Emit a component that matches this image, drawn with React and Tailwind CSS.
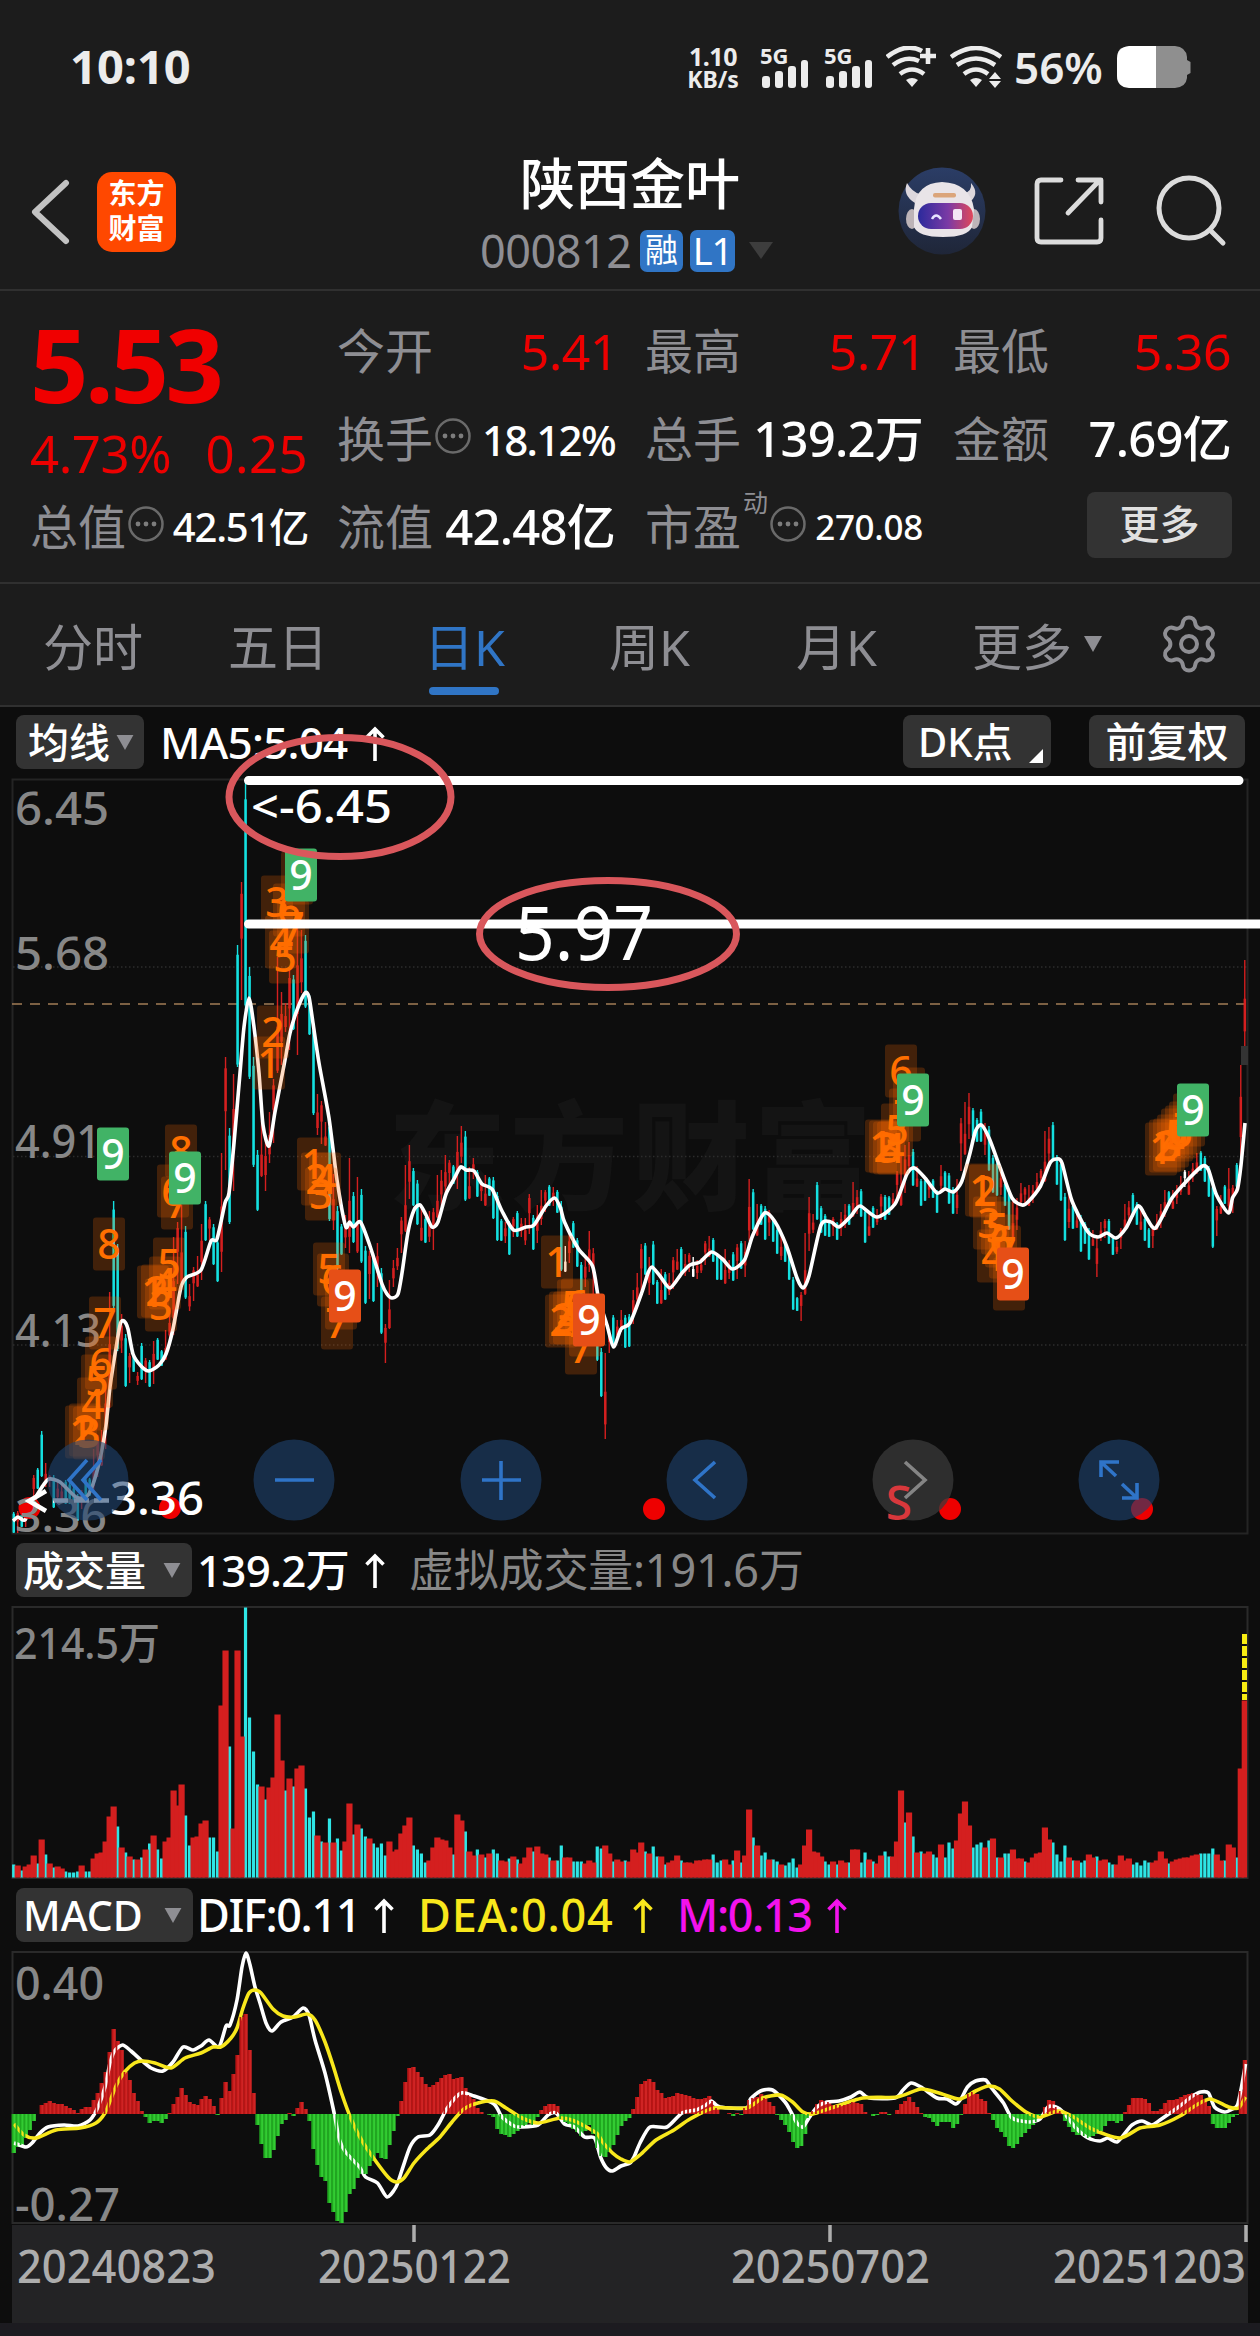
import { Settings } from "lucide-react";

const STEP = 3.997;
const barX = (i) => 13.7 + i * STEP;

// one entry per trading day: r = up, c = down, then bar height
const VOLUME =
  "c13 r12 c7 r11 r13 r22 c14 r38 c23 r14 c10 r11 r9 c6 c5 c5 c6 r12 c6 c6 r19 r24 r25 r36 r61 r71 c51 r30 c25 r21 c18 r18 c20 r28 c34 r42 c28 c19 r36 r40 r87 r72 r93 c62 c32 r40 r41 r54 r57 c40 c40 c26 r172 r227 c131 r49 r227 r141 c270 c160 c126 c93 r91 c78 r90 r100 r163 r117 c87 r99 c91 r109 r112 c89 c60 c66 r42 c36 r35 c59 r35 c39 c27 r36 r74 c43 r53 c49 c41 r39 c34 c30 c34 c22 r36 r26 r28 r44 r52 r60 c32 c28 c24 c15 r17 r30 r40 r38 r37 r30 c23 r63 r57 c46 r26 r22 c28 r23 c20 r24 c28 c24 r17 r16 c19 r21 c18 r14 r20 r30 c26 r31 r24 r23 c20 r17 c17 c32 r20 r20 c16 c16 c16 r14 r17 r15 c31 c29 r32 r24 c16 r18 r16 c17 r16 r28 r25 r35 c26 r24 c31 c21 r21 c13 r15 r17 r22 c17 r15 r15 r14 r17 r17 r18 r18 c23 c15 c17 r18 r13 c17 r27 c15 r22 r68 c40 r32 c22 c25 r18 c18 c16 r13 c12 c15 c19 c10 r13 r32 r48 r26 r25 r21 c16 c13 r16 c13 r17 r15 c15 r28 r28 c15 c25 r18 c16 r14 r22 c26 c21 r21 r36 r87 c55 r65 c41 r25 c26 r24 r26 c23 c20 r33 c20 c35 c29 r37 r64 r76 r52 c30 c33 c35 r30 c37 r39 c20 r20 c24 c24 r28 r19 r19 c16 r15 r20 r24 r25 r50 r38 c35 c23 c16 c32 r20 c17 r17 c15 c17 r23 r20 c21 r17 r18 c15 c13 r13 r22 r17 r19 c13 c15 c12 c17 c15 r15 r17 r26 r19 c14 r16 r18 r19 r20 r20 r22 r23 c24 c24 c24 c29 r23 r17 c17 r33 r30 c20 r109 r177";

// high-low of every candle
const CANDLES =
  "c1512-1533 r1511-1533 c1514-1527 r1508-1527 r1499-1518 r1475-1504 c1468-1489 c1431-1477 r1463-1487 r1475-1487 c1475-1508 r1482-1504 r1482-1503 c1480-1504 c1483-1504 c1487-1508 c1494-1521 r1490-1509 c1478-1497 c1478-1496 r1449-1494 r1435-1477 r1430-1466 r1384-1449 r1292-1408 c1201-1308 c1244-1351 r1314-1353 c1334-1387 r1353-1383 c1354-1372 r1372-1385 c1343-1380 r1358-1383 c1360-1387 r1341-1384 c1338-1360 c1350-1366 r1330-1360 r1313-1346 r1237-1335 r1222-1284 r1205-1284 c1226-1299 r1284-1311 r1267-1301 r1256-1287 r1224-1280 c1201-1241 r1217-1241 c1224-1265 c1239-1282 r1153-1272 r1057-1170 c1128-1224 r1074-1191 c945-1067 r882-1000 c781-1010 c967-1079 c1057-1167 c1150-1211 r1121-1177 r1141-1191 r1112-1163 r1079-1143 r957-1073 r992-1065 r1003-1032 r970-1050 c975-1030 r927-1055 r930-993 c935-1008 c995-1035 c1023-1115 r1094-1135 r1101-1144 r1122-1146 c1119-1221 r1174-1230 c1206-1270 c1224-1255 r1215-1248 r1158-1253 c1192-1243 r1177-1253 c1189-1263 c1246-1304 r1251-1299 c1253-1302 r1243-1287 c1268-1334 r1324-1363 r1280-1329 r1260-1287 r1248-1270 r1217-1253 r1165-1232 r1145-1199 c1168-1206 c1180-1225 r1208-1241 c1217-1243 r1211-1242 r1208-1250 r1175-1218 r1170-1206 r1155-1193 r1160-1187 c1165-1184 r1136-1189 r1126-1163 c1131-1201 r1167-1199 r1158-1179 c1170-1197 r1182-1201 r1175-1206 c1177-1196 c1177-1219 c1192-1241 c1219-1241 r1222-1243 c1221-1255 r1217-1237 c1211-1237 r1218-1237 r1218-1245 r1194-1234 c1215-1250 r1205-1243 r1190-1225 r1190-1212 c1185-1206 r1187-1206 c1190-1213 c1201-1271 w1246-1272 r1232-1263 c1221-1248 c1238-1267 c1262-1298 r1258-1287 r1231-1272 r1248-1301 c1301-1361 c1348-1397 r1353-1439 r1332-1353 c1315-1346 r1320-1342 r1310-1332 c1315-1348 c1314-1347 r1290-1324 r1273-1305 r1244-1295 c1243-1275 r1257-1295 c1241-1285 c1280-1304 r1269-1304 c1272-1300 r1273-1295 r1257-1289 r1249-1270 c1247-1273 r1254-1276 r1253-1272 w1257-1277 r1260-1279 r1258-1273 r1241-1265 r1236-1257 c1238-1262 c1254-1280 c1257-1280 r1249-1284 r1260-1279 c1252-1281 r1244-1279 c1241-1269 r1241-1277 r1179-1241 c1189-1230 r1204-1236 c1204-1225 c1206-1240 r1210-1236 c1217-1242 c1228-1254 r1236-1260 c1241-1262 c1252-1280 c1277-1310 c1297-1311 r1292-1321 r1233-1295 r1197-1251 r1214-1233 c1182-1220 c1206-1233 c1214-1236 c1220-1237 r1217-1236 c1222-1240 r1212-1236 r1204-1228 c1204-1225 r1182-1217 r1190-1214 c1189-1217 c1209-1243 r1212-1236 c1206-1228 r1209-1225 r1194-1220 c1195-1220 c1196-1215 r1193-1206 r1171-1200 r1155-1206 r1145-1193 r1142-1171 c1149-1186 r1166-1187 c1179-1206 c1179-1201 r1182-1198 c1179-1198 c1190-1213 r1165-1190 c1171-1190 c1173-1204 c1187-1214 r1179-1214 r1118-1171 r1102-1155 r1093-1139 c1108-1137 c1118-1142 c1109-1142 r1123-1155 c1126-1171 c1155-1193 c1161-1196 r1171-1195 c1182-1206 c1190-1230 r1201-1238 r1198-1230 r1183-1206 r1187-1203 r1185-1206 r1185-1203 r1173-1193 r1169-1188 r1131-1182 r1127-1166 c1122-1161 c1155-1185 c1161-1201 c1193-1241 r1193-1228 c1204-1229 r1209-1228 c1215-1252 c1222-1244 c1228-1260 r1230-1246 r1236-1277 r1222-1241 r1219-1238 c1219-1244 c1236-1255 r1241-1254 r1228-1249 r1204-1230 r1201-1222 c1193-1217 c1202-1225 r1209-1230 c1217-1241 c1228-1248 r1225-1248 r1214-1230 r1204-1228 r1190-1217 c1191-1206 r1190-1209 r1185-1204 r1176-1195 w1170-1187 r1171-1195 r1163-1182 r1153-1174 c1151-1171 c1156-1182 c1166-1197 c1182-1248 r1206-1236 r1195-1214 c1185-1204 r1168-1214 r1185-1213 c1163-1187 r1065-1171 r960-1046";

const MACD_BARS = [
  -39, -33, -31, -24, -16, -7, 0, 9, 11, 13, 11, 10, 10, 8, 6, 4, 1, 5, 7, 7, 14, 21, 31, 42, 62, 85, 73, 64, 42, 34,
  21, 13, 3, -3, -9, -7, -7, -9, -5, 1, 10, 17, 26, 19, 12, 10, 9, 15, 18, 15, 8, -1, 16, 32, 23, 40, 59, 97, 100, 64,
  21, -11, -30, -44, -44, -36, -22, -10, -6, 1, -2, 6, 12, 5, -7, -35, -51, -63, -67, -89, -98, -107, -109, -98, -80,
  -75, -64, -60, -60, -52, -47, -39, -44, -45, -31, -17, -2, 13, 32, 46, 47, 42, 37, 30, 27, 29, 32, 36, 39, 40, 35, 36,
  37, 26, 19, 15, 6, 2, 0, -1, -3, -15, -20, -21, -23, -20, -17, -14, -12, -9, -11, -3, 4, 8, 10, 10, 8, -5, -8, -10,
  -15, -18, -22, -17, -11, -20, -34, -42, -43, -38, -31, -21, -12, -7, -4, 5, 17, 30, 33, 35, 32, 24, 21, 16, 17, 18,
  21, 20, 19, 18, 16, 15, 15, 16, 18, 13, 6, 0, 0, 1, -2, 1, -1, 6, 14, 16, 17, 20, 16, 12, 8, -1, -6, -11, -18, -28,
  -34, -32, -20, -4, 3, 10, 14, 13, 12, 9, 9, 9, 9, 10, 12, 11, 10, 2, 0, -2, -1, 2, 2, -1, 0, 4, 10, 13, 17, 12, 7, 1,
  -3, -4, -8, -12, -8, -8, -8, -14, -10, -1, 10, 20, 22, 20, 15, 13, 1, -6, -14, -18, -23, -32, -34, -30, -23, -19, -15,
  -11, -8, -2, 7, 14, 13, 7, 3, -7, -13, -18, -21, -21, -22, -24, -22, -20, -17, -12, -7, -7, -9, -7, 2, 9, 16, 16, 16,
  15, 11, 3, 3, 5, 11, 14, 14, 15, 17, 19, 20, 21, 20, 19, 15, 8, -10, -14, -14, -14, -9, -3, -1, 23, 54,
];

const MA5 =
  "13,1521 18,1517 25,1520 32,1504 42,1487 49,1479 60,1482 76,1497 86,1497 92,1487 100,1459 106,1425 110,1387 117,1342 120.5,1323 124,1321 128,1329 133,1354 141,1366 149,1371 159,1365 166,1354 173,1329 181,1287 187,1277 201,1270 211,1241 217,1239 225,1203 229,1193 234,1143 240,1073 244,1027 249,998 254,1027 259,1073 263,1125 269,1146 275,1112 285,1060 290,1033 297,1010 305,993 309,997 313,1023 319,1063 329,1118 337,1180 345.5,1226 349.5,1222 353.5,1227 360.5,1222 370,1246 382,1284 387,1294 392,1298 398,1294 402,1273 408,1232 414,1210 420,1205 426,1215 432,1227 438,1222 446,1194 454,1179 460.5,1167 466,1170 474,1171 482,1184 492,1189 502,1211 513.5,1230 526,1227 534,1225 546,1206 554.5,1198 560.5,1208 564.5,1222 578.5,1249 592.5,1266 598.5,1298 607,1325 613.5,1347 621,1329 630,1323 642,1292 648,1273 652,1267 660,1276 670,1288 682,1273 690,1265 700,1262 711.5,1252 722.5,1259 732.5,1269 744.5,1260 752.5,1236 764.5,1213 774.5,1221 786.5,1246 797,1278 803,1288 809,1276 821,1225 831,1222 839,1227 851,1216 860,1206 877,1217 895,1204 907,1174 914.5,1168 925,1178 937,1193 945,1189 953.5,1192 961.5,1182 969.5,1155 975.5,1131 981.5,1125 989.5,1139 999.5,1166 1012,1198 1022,1205 1028,1202 1040.5,1186 1050,1163 1056.5,1159 1062,1163 1072,1201 1088,1232 1098,1237 1107,1233 1116,1238 1126,1228 1138,1206 1146,1217 1155.5,1228 1172,1198 1188.5,1179 1202.5,1166 1208.5,1170 1216.5,1195 1228.5,1213 1232.5,1198 1237.5,1189 1241,1165 1245,1123";

const DIF =
  "14,2143 26,2147 32,2143 40,2133 48,2127 64,2125 78,2126 90,2120 98,2107 105,2087 110,2063 114.5,2051 122.5,2045 131,2051 141,2060 151,2068 163,2071 173,2062 183,2047 193,2050 201,2046 209,2040 219,2047 226,2026 230,2025 237,2000 242,1967 246,1953 250,1965 255,1987 260,2003 266,2023 272,2031 281,2022 293,2017 303,2008 309,2015 315,2040 325,2073 333.5,2110 339.5,2140 345.5,2152 359.5,2167 365.5,2177 377.5,2183 387,2197 396,2187 402,2170 410,2147 418,2137 430,2135 438,2125 448,2107 461,2093 474,2096 494,2104 502,2117 514,2126 522,2127 538,2125 548,2115 556,2113 564.5,2124 574.5,2127 584.5,2137 594.5,2138 600.5,2157 606.5,2168 612.5,2171 621,2166 630,2163 634,2157 640,2143 650,2127 667,2127 682,2113 696,2110 706,2105 711.5,2101 720,2107 746.5,2108 750.5,2099 760.5,2091 772.5,2090 785,2102 791,2112 797,2123 803,2127 809,2118 817,2107 827,2102 839,2101 851,2097 860,2092 869,2098 895,2098 903,2090 911,2083 921,2087 937,2098 947,2099 956,2104 961.5,2098 967.5,2087 975.5,2081 985.5,2080 991.5,2088 1003.5,2103 1012,2118 1028,2122 1040,2119 1048,2107 1056,2107 1064,2113 1076,2128 1088,2138 1100,2141 1108,2138 1117,2142 1126,2132 1132,2125 1142,2121 1152,2125 1160,2120 1178.5,2107 1192.5,2096 1200.5,2092 1208.5,2093 1214.5,2107 1224.5,2112 1232.5,2109 1237.5,2105 1241.5,2087 1245.5,2064";

const DEA =
  "14,2124 24,2135 36,2138 56,2130 80,2128 96,2123 105,2113 110.5,2100 116.5,2085 124.5,2072 134.5,2063 143,2061 155,2063 171,2068 185,2058 201,2053 213,2047 221,2047 231,2038 237,2028 243,2008 249,1993 255,1990 261,1993 273,2009 283,2016 295,2017 307,2014 315,2020 325,2042 333.5,2067 341.5,2093 351.5,2120 361.5,2140 373.5,2158 388,2177 396,2182 404,2178 414,2163 426,2150 440,2137 452,2122 464,2109 478,2103 494,2101 506,2108 522,2118 538,2123 560,2118 574.5,2121 596.5,2133 602.5,2142 612.5,2153 621,2159 630,2162 640,2155 656,2140 674,2130 690,2119 714,2108 746.5,2108 762.5,2098 780.5,2095 792.5,2102 803,2112 813,2114 831,2108 863,2098 897,2097 921,2089 939,2093 959.5,2099 975.5,2091 988.5,2086 999.5,2089 1012,2101 1026,2112 1040,2117 1058,2111 1072,2116 1092,2129 1120,2138 1140,2128 1160,2125 1180,2116 1196.5,2105 1210.5,2099 1228.5,2107 1238.5,2108 1245.5,2097";

// nine-turn runs: first bar centre x, then the y centre of marks 1..9
const RUNS = [
  { x: 81, up: true, ys: [1432, 1430, 1433, 1404, 1381, 1363, 1323, 1244, 1154] },
  { x: 153, up: true, ys: [1292, 1291, 1305, 1283, 1264, 1191, 1203, 1151, 1178] },
  { x: 269, up: true, ys: [1063, 1032, 902, 942, 957, 910, 927, 878, 875] },
  { x: 313, up: false, ys: [1164, 1179, 1194, 1179, 1269, 1280, 1323, 1303, 1296] },
  { x: 557, up: false, ys: [1262, 1321, 1318, 1318, 1306, 1305, 1348, 1330, 1320] },
  { x: 881, up: true, ys: [1146, 1147, 1148, 1148, 1130, 1071, 1115, 1094, 1100] },
  { x: 981, up: false, ys: [1190, 1191, 1223, 1256, 1228, 1241, 1252, 1284, 1274] },
  { x: 1161, up: true, ys: [1149, 1146, 1145, 1141, 1135, 1132, 1128, 1120, 1110] },
];

const COLORS = { r: "#d41f1f", c: "#2ee6e6", w: "#ffffff" };

const smooth = (points) => {
  const p = points.split(" ").map((s) => s.split(",").map(Number));
  let d = `M${p[0][0]} ${p[0][1]}`;
  for (let i = 0; i < p.length - 1; i++) {
    const a = p[i - 1] || p[i];
    const b = p[i];
    const c = p[i + 1];
    const e = p[i + 2] || c;
    d += `C${b[0] + (c[0] - a[0]) / 8} ${b[1] + (c[1] - a[1]) / 8} ${c[0] - (e[0] - b[0]) / 8} ${c[1] - (e[1] - b[1]) / 8} ${c[0]} ${c[1]}`;
  }
  return d;
};

function Label({ x, y, w, size = 46, fill = "#878787", weight = 500, children }) {
  return (
    <text x={x} y={y} textLength={w} lengthAdjust="spacingAndGlyphs" fontSize={size} fontWeight={weight} fill={fill}>
      {children}
    </text>
  );
}

function Candle({ code, i }) {
  const [hi, lo] = code.slice(1).split("-").map(Number);
  const x = barX(i);
  const color = code[0] === "c" ? "#14e0e0" : COLORS[code[0]];
  const h = lo - hi;
  const from = code[0] === "c" ? 0.08 : [0.45, 0.1, 0.6, 0.3][i % 4];
  const size = code[0] === "c" ? 0.9 : 0.38;
  return (
    <>
      <rect x={x - 0.7} y={hi} width="1.4" height={h} fill={color} />
      <rect x={x - 1.2} y={hi + h * from} width="2.5" height={h * size} fill={color} />
    </>
  );
}

function PriceChart() {
  return (
    <svg viewBox="0 778 1260 757" className="block h-[757px] w-full">
      <g fontSize="118" fontWeight="900" fill="#141414">
        <text x="388" y="1201" textLength="484">东方财富</text>
      </g>
      <rect x="12.5" y="779.5" width="1235" height="754" fill="none" stroke="#242424" strokeWidth="2" />
      <g stroke="#2c2c2c" strokeWidth="1.5" strokeDasharray="1.5 2.5">
        <path d="M13 967H1247M13 1156.5H1247M13 1345H1247" />
      </g>
      <path d="M12 1004H1247" stroke="#a17c55" strokeWidth="1.6" strokeDasharray="10 8" />
      <Label x={15} y={825} w={94}>6.45</Label>
      <Label x={15} y={970} w={94}>5.68</Label>
      <Label x={15} y={1158} w={86}>4.91</Label>
      <Label x={15} y={1347} w={86}>4.13</Label>
      {CANDLES.split(" ").map((code, i) => (
        <Candle key={i} code={code} i={i} />
      ))}
      <rect x="1241" y="1046" width="7" height="19" fill="#333" />
      <path d={smooth(MA5)} fill="none" stroke="#fff" strokeWidth="3.6" strokeLinejoin="round" />
      {RUNS.map((run) =>
        run.ys.slice(0, 8).map((y, i) => (
          <g key={`${run.x}-${i}`}>
            <rect x={run.x + i * 4 - 16} y={y - 26.5} width="32" height="53" rx="3" fill="#ff6a00" fillOpacity="0.22" />
            <text x={run.x + i * 4} y={y + 15} fontSize="41" fontWeight="500" textAnchor="middle" fill="#ff6f00">{i + 1}</text>
          </g>
        ))
      )}
      {RUNS.map((run) => (
        <g key={run.x}>
          <rect x={run.x + 16} y={run.ys[8] - 26.5} width="32" height="53" rx="3" fill={run.up ? "#41b366" : "#e64f17"} />
          <text x={run.x + 32} y={run.ys[8] + 15} fontSize="41" fontWeight="500" textAnchor="middle" fill="#fff">9</text>
        </g>
      ))}
      <g fill="#ee0000">
        <circle cx="29.5" cy="1508" r="11" />
        <circle cx="170" cy="1508" r="11" />
        <circle cx="654" cy="1509" r="11" />
        <circle cx="950" cy="1509" r="11" />
        <circle cx="1142" cy="1509" r="11" />
      </g>
      <Label x={15} y={1532} w={92}>3.36</Label>
      <path d="M46 1491L29 1501L46 1511M53 1500.5h15m6 0h15m5 0h15" fill="none" stroke="#fff" strokeWidth="4.6" />
      <Label x={110} y={1515} w={94} fill="#fff">3.36</Label>
      <Label x={251} y={823} w={141} fill="#fff">&lt;-6.45</Label>
    </svg>
  );
}

const glyphs = {
  rewind: "M-1 -20L-19 0L-1 20M13 -20L-5 0L13 20",
  minus: "M-19 0H20",
  plus: "M-19 0H20M0 -19V20",
  left: "M8 -18L-12 0L8 18",
  right: "M-8 -18L12 0L-8 18",
  expand: "M0 -18H-18V-3M-18 -18L-3 -4M3 18H18V3M18 18L3 4",
};

function RoundButton({ name }) {
  const off = name === "right";
  return (
    <svg viewBox="-41 -41 82 82" className="size-[82px]">
      <circle r="40.5" fill={off ? "#3a3a3a" : "#1e4270"} fillOpacity={off ? 0.75 : 0.6} />
      <path d={glyphs[name]} fill="none" stroke={off ? "#858585" : "#2f74c8"} strokeWidth="3.6" />
    </svg>
  );
}

function VolumeChart() {
  const bars = VOLUME.split(" ").map((s, i) => ({ t: s[0], h: Number(s.slice(1)), x: barX(i) }));
  return (
    <svg viewBox="0 1606 1260 273" className="block h-[273px] w-full">
      <rect x="12.5" y="1607" width="1235" height="271" fill="none" stroke="#2a2a2a" strokeWidth="2" />
      <Label x={14} y={1659} w={146} size={43}>214.5万</Label>
      {bars.filter((b) => b.t === "c").map((b) => (
        <rect key={b.x} x={b.x - 1.6} y={1877.5 - b.h} width="3.2" height={b.h} fill={COLORS.c} />
      ))}
      {bars.filter((b) => b.t === "r").map((b) => (
        <rect key={b.x} x={b.x - 3.1} y={1877.5 - b.h} width={b.x > 1244 ? 5.4 : 6.2} height={b.h} fill={COLORS.r} />
      ))}
      <path d="M1244.5 1634V1700" stroke="#f7ec12" strokeWidth="5" strokeDasharray="10 2" />
    </svg>
  );
}

function MacdChart() {
  return (
    <svg viewBox="0 1951 1260 274" className="block h-[274px] w-full">
      <rect x="12.5" y="1952" width="1235" height="271" fill="none" stroke="#2a2a2a" strokeWidth="2" />
      <Label x={15} y={2000} w={89} size={45}>0.40</Label>
      <Label x={15} y={2221} w={105} size={45}>-0.27</Label>
      {MACD_BARS.map((v, i) => (
        <rect key={i} x={barX(i) - 1.8} y={v > 0 ? 2114 - v : 2114} width="4" height={Math.abs(v)} fill={v > 0 ? "#d02424" : "#33cc33"} />
      ))}
      <path d={smooth(DIF)} fill="none" stroke="#fff" strokeWidth="3.600" strokeLinejoin="round" />
      <path d={smooth(DEA)} fill="none" stroke="#f8e71c" strokeWidth="3.600" strokeLinejoin="round" />
      {/* bar edges stay above the lines */}
      {MACD_BARS.map((v, i) => (
        <rect key={i} x={barX(i) - 2} y={v > 0 ? 2114 - v : 2114} width="1.7" height={Math.abs(v)} fill={v > 0 ? "#b81414" : "#1fa81f"} />
      ))}
    </svg>
  );
}

function Annotations() {
  return (
    <svg viewBox="0 706 1260 829" className="pointer-events-none absolute inset-0 h-[829px] w-full">
      <path d="M248.500 780.500H1239M248.500 924H1264" stroke="#fff" strokeWidth="9" strokeLinecap="round" />
      <Label x={515} y={960} w={138} size={74} weight={400} fill="#fff">5.97</Label>
      <g fill="none" stroke="#d9575c" strokeWidth="7">
        <ellipse cx="340" cy="797" rx="111" ry="59.5" />
        <ellipse cx="608" cy="934" rx="128.5" ry="53.5" />
      </g>
      <text x="899" y="1520" fontSize="48" fontWeight="500" textAnchor="middle" fill="#d8383c">S</text>
    </svg>
  );
}

function Bars() {
  return (
    <div className="flex w-[48px] flex-col">
      <span className="-mt-[2px] h-[20px] text-[22px] leading-[22px] font-bold">5G</span>
      <svg viewBox="0 0 48 36" className="-mt-[12px] h-[36px] w-[48px]" fill="#ececec">
        <rect x="2" y="24" width="8" height="12" rx="3" />
        <rect x="15" y="19" width="8" height="17" rx="3" />
        <rect x="28" y="14" width="8" height="22" rx="3" />
        <rect x="41" y="8" width="7" height="28" rx="3" />
      </svg>
    </div>
  );
}

function Wifi({ plus }) {
  return (
    <svg viewBox="0 0 52 42" className="h-[42px] w-[52px]" fill="none" stroke="#ececec" strokeWidth="4.6">
      <path d={plus ? "M1 11Q20 -4 36 5" : "M1 11Q26 -7 51 11"} />
      <path d={plus ? "M7 19Q20 9 33 15" : "M7 19Q26 6 45 19"} />
      <path d="M14 28Q26 19 38 28" />
      <path d="M20 34Q26 30 32 34L26 41Z" fill="#ececec" stroke="none" />
      {plus ? (
        <path d="M34 10H50M42 2V18" />
      ) : (
        <path d="M39 33L45 26L51 33ZM39 35L45 42L51 35Z" fill="#ececec" stroke="none" />
      )}
    </svg>
  );
}

function StatusBar() {
  return (
    <div className="flex h-[128px] items-start pt-[46px] text-[#ececec]">
      <span className="ml-[70px] w-[618px] text-[47px] leading-[41px] font-bold">10:10</span>
      <div className="w-[71px] text-center font-bold">
        <div className="-ml-[21px] -mt-[3px] text-[25px] leading-[26px] tracking-[-0.5px]">1.10</div>
        <div className="-ml-[21px] -mt-[3px] text-[23px] leading-[26px]">KB/s</div>
      </div>
      <div className="ml-[1px] flex gap-[16px]">
        <Bars />
        <Bars />
      </div>
      <div className="ml-[14px] flex gap-[12px]">
        <Wifi plus />
        <Wifi />
      </div>
      <span className="ml-[12px] w-[92px] text-[44px] leading-[42px] font-semibold">56%</span>
      <svg viewBox="0 0 74 42" className="ml-[11px] h-[42px] w-[74px]">
        <path d="M38 0H58Q69 1 70 11V14L73.500 16V27L70 29V32Q69 41 58 42H38Z" fill="#8f8f8f" />
        <path d="M39 0H12Q0 1 0 12V30Q0 41 12 42H39Z" fill="#fff" />
      </svg>
    </div>
  );
}

function Robot() {
  return (
    <svg viewBox="0 0 88 88" className="size-[88px]">
      <defs>
        <linearGradient id="visor" x1="0" x2="1">
          <stop offset="0" stopColor="#2b2a9c" />
          <stop offset="0.55" stopColor="#7b3aa5" />
          <stop offset="1" stopColor="#e0485a" />
        </linearGradient>
        <linearGradient id="disc" x1="0" y1="0" x2="0" y2="1">
          <stop offset="0" stopColor="#2b3d66" />
          <stop offset="1" stopColor="#1f2638" />
        </linearGradient>
      </defs>
      <circle cx="44" cy="44" r="43.500" fill="url(#disc)" />
      <path d="M17 36Q4 28 9 16Q14 25 22 27ZM70 36Q83 28 73 16Q74 25 66 26Z" fill="#dcd7dd" />
      <ellipse cx="14" cy="52" rx="6" ry="10" fill="#bdb4b8" />
      <ellipse cx="76" cy="52" rx="6" ry="10" fill="#bdb4b8" />
      <path d="M16 42Q18 16 44 15Q72 16 76 42L74 60Q70 70 45 70Q20 70 16 60Z" fill="#e9e4e8" />
      <rect x="35" y="26" width="23" height="4.500" rx="2" fill="#dba57b" />
      <rect x="20" y="36" width="55" height="26" rx="13" fill="url(#visor)" />
      <path d="M34 52Q38 45 43 52" fill="none" stroke="#e8e4ff" strokeWidth="2.500" />
      <rect x="55" y="42" width="9" height="11" rx="2" fill="#f3e6f4" />
    </svg>
  );
}

function Header() {
  return (
    <div className="flex h-[163px] items-start border-b-2 border-[#303030]">
      <svg viewBox="0 0 40 66" className="mt-[51px] ml-[30px] h-[66px] w-[40px]">
        <path d="M36 4L5 33L36 62" fill="none" stroke="#c2c2c2" strokeWidth="6" strokeLinecap="round" strokeLinejoin="round" />
      </svg>
      <div className="mt-[44px] ml-[27px] h-[80px] w-[79px] rounded-[15px] bg-[#ff4800] pt-[4px] text-center text-[28px] leading-[35px] font-bold text-white">
        东方
        <br />
        财富
      </div>
      <div className="ml-[302px] w-[310px]">
        <div className="mt-[20px] ml-[42px] text-[55px] leading-[70px] font-medium whitespace-nowrap text-white">陕西金叶</div>
        <div className="mt-[8px] flex items-center">
          <span className="w-[159px] pl-[2px] text-[45px] leading-[50px] tracking-[-0.5px] text-[#8e8e93]">000812</span>
          <span className="ml-[3px] h-[42px] w-[43px] rounded-[7px] bg-[#3075c5] text-center text-[33px] leading-[40px] text-white">融</span>
          <span className="ml-[7px] h-[42px] w-[45px] rounded-[7px] bg-[#3075c5] text-center text-[38px] leading-[41px] tracking-[-1px] text-white">L1</span>
          <svg viewBox="0 0 26 18" className="ml-[13px] h-[18px] w-[26px]">
            <path d="M1 0H25L13 17Z" fill="#3d3d3d" />
          </svg>
        </div>
      </div>
      <div className="mt-[39px] ml-[110px]">
        <Robot />
      </div>
      <svg viewBox="0 0 70 70" className="mt-[48px] ml-[48px] size-[70px]" fill="none" stroke="#dcdcdc" strokeWidth="4.800" strokeLinecap="round" strokeLinejoin="round">
        <path d="M27 4H7Q3 4 3 8V62Q3 66 7 66H63Q67 66 67 62V44M44 4H67V26M66 4L34 37" />
      </svg>
      <svg viewBox="0 0 72 72" className="mt-[47px] ml-[51px] size-[72px]" fill="none" stroke="#dcdcdc" strokeWidth="5" strokeLinecap="round">
        <circle cx="34" cy="33" r="30" />
        <path d="M55 55L68 68" />
      </svg>
    </div>
  );
}

function Dots() {
  return (
    <svg viewBox="0 0 36 36" className="size-[36px] shrink-0">
      <circle cx="18" cy="18" r="16.500" fill="none" stroke="#6a6a6a" strokeWidth="2.500" />
      <g fill="#7d7d7d">
        <circle cx="10" cy="18" r="2.400" />
        <circle cx="18" cy="18" r="2.400" />
        <circle cx="26" cy="18" r="2.400" />
      </g>
    </svg>
  );
}

function Cell({ label, value, sup, dots, className }) {
  return (
    <div className="flex h-[88px] items-center justify-between whitespace-nowrap">
      <span className="flex items-center text-[48px] text-[#8e8e93]">
        {label}
        {sup && <span className="-mt-[48px] ml-[2px] text-[25px]">{sup}</span>}
        {dots && (
          <span className="-mt-[7px] ml-[2px]">
            <Dots />
          </span>
        )}
      </span>
      <span className={className}>{value}</span>
    </div>
  );
}

function Quote() {
  const red = "text-[50px] tracking-[-0.5px] text-[#ec0000]";
  const redOne = "-mr-[3px] text-[50px] tracking-[-0.5px] text-[#ec0000]";
  const white = "text-[49px] tracking-[-0.8px] font-medium text-white";
  return (
    <div className="flex h-[293px] border-b-2 border-[#303030] pt-[16px]">
      <div className="ml-[30px] w-[278px]">
        <div className="h-[100px] text-[102px] leading-[114px] font-bold tracking-[-3.300px] text-[#f00000]">5.53</div>
        <div className="flex h-[76px] items-center justify-between pt-[16px] text-[51px] tracking-[-0.5px] text-[#ec0000]">
          <span>4.73%</span>
          <span className="tracking-[0.3px]">0.25</span>
        </div>
        <Cell label="总值" dots value="42.51亿" className="text-[40px] font-medium tracking-[-1.200px] text-white" />
      </div>
      <div className="ml-[29px] w-[278px]">
        <Cell label="今开" value="5.41" className={redOne} />
        <Cell label="换手" dots value="18.12%" className="text-[42px] font-medium tracking-[-1.700px] text-white" />
        <Cell label="流值" value="42.48亿" className={white} />
      </div>
      <div className="ml-[30px] w-[278px]">
        <Cell label="最高" value="5.71" className={redOne} />
        <Cell label="总手" value="139.2万" className={white} />
        <Cell label="市盈" sup="动" dots value="270.08" className="text-[35px] font-medium tracking-[-0.300px] text-white" />
      </div>
      <div className="ml-[30px] w-[278px]">
        <Cell label="最低" value="5.36" className={red} />
        <Cell label="金额" value="7.69亿" className={white} />
        <div className="mt-[9px] ml-[134px] h-[66px] w-[145px] rounded-[8px] bg-[#333] text-center text-[40px] leading-[63px] font-medium text-[#e0e0e0]">更多</div>
      </div>
    </div>
  );
}

function Tabs() {
  return (
    <div className="flex h-[123px] border-b-2 border-[#303030] text-[50px] leading-[126px] whitespace-nowrap text-[#8e8e93]">
      <span className="ml-[43px] w-[185px]">分时</span>
      <span className="w-[196px]">五日</span>
      <div className="flex w-[185px] flex-col text-[#3075c5]">
        <span className="h-[103px]">日K</span>
        <span className="ml-[5px] h-[8px] w-[70px] rounded-full bg-[#3075c5]" />
      </div>
      <span className="w-[187px]">周K</span>
      <span className="w-[176px]">月K</span>
      <span className="w-[102px]">更多</span>
      <svg viewBox="0 0 18 16" className="mt-[52px] ml-[10px] h-[16px] w-[18px]">
        <path d="M0 0H18L9 16Z" fill="#8e8e93" />
      </svg>
      <Settings className="mt-[28px] ml-[55px] size-[64px]" color="#8e8e93" strokeWidth={1.5} />
    </div>
  );
}

function Drop({ children, className, triangle = "mr-[11px]" }) {
  return (
    <div className={`flex h-[54px] shrink-0 items-center rounded-[8px] bg-[#333] text-[41px] leading-[52px] font-medium text-white ${className}`}>
      {children}
      <svg viewBox="0 0 18 16" className={`ml-auto h-[15px] w-[18px] ${triangle}`}>
        <path d="M0 0H18L9 16Z" fill="#8e8e93" />
      </svg>
    </div>
  );
}

function Arrow({ className }) {
  return (
    <svg viewBox="0 0 20 36" className={`h-[36px] w-[20px] shrink-0 ${className}`} fill="none" stroke="currentColor" strokeWidth="3.600">
      <path d="M10 35V3M1.500 11.500L10 3L18.500 11.500" />
    </svg>
  );
}

export default function App() {
  return (
    <div className="h-[2336px] w-[1260px] overflow-hidden bg-[#0d0d0d] font-['Noto_Sans','Noto_Sans_CJK_SC',sans-serif]">
      <div className="bg-[#1c1c1c]">
        <StatusBar />
        <Header />
        <Quote />
        <Tabs />
      </div>

      <div className="relative -mt-[1px] h-[829px]">
        <div className="flex h-[72px] items-start pt-[9px] whitespace-nowrap">
          <Drop className="ml-[16px] w-[128px] pl-[12px]" triangle="mr-[10px]">均线</Drop>
          <span className="ml-[16px] w-[202px] text-[44px] leading-[54px] font-medium tracking-[-0.8px] text-white">MA5:5.04</span>
          <Arrow className="mt-[11px] ml-[3px] text-white" />
          <div className="ml-[518px] flex h-[53px] w-[148px] items-center rounded-[8px] bg-[#333] pl-[15px] text-[40px] font-medium text-white">
            DK点
            <svg viewBox="0 0 14 14" className="mt-[28px] mr-[8px] ml-auto size-[14px]">
              <path d="M14 0V14H0Z" fill="#fff" />
            </svg>
          </div>
          <div className="ml-[38px] h-[53px] w-[156px] rounded-[8px] bg-[#333] text-center text-[41px] leading-[52px] font-medium text-white">前复权</div>
        </div>
        <PriceChart />
        <div className="absolute top-[733px] left-[47px] flex gap-[124.300px]">
          {["rewind", "minus", "plus", "left", "right", "expand"].map((name) => (
            <RoundButton key={name} name={name} />
          ))}
        </div>
        <Annotations />
      </div>

      <div className="flex h-[71px] items-start pt-[8px] text-[44px] leading-[54px] whitespace-nowrap text-white">
        <Drop className="ml-[16px] w-[176px] pl-[7px]">成交量</Drop>
        <span className="ml-[5px] w-[158px] font-medium tracking-[-0.8px]">139.2万</span>
        <Arrow className="mt-[10px] ml-[10px]" />
        <span className="ml-[24px] text-[45px] tracking-[-0.2px] text-[#878787]">虚拟成交量:191.6万</span>
      </div>
      <VolumeChart />

      <div className="flex h-[72px] items-start pt-[9px] text-[45px] leading-[53px] font-medium whitespace-nowrap text-white">
        <Drop className="ml-[16px] w-[177px] pl-[7px]">MACD</Drop>
        <span className="ml-[4px] w-[164px] tracking-[-1.400px]">DIF:0.11</span>
        <Arrow className="mt-[10px] ml-[13px]" />
        <span className="ml-[24px] w-[204px] tracking-[0.800px] text-[#f8e71c]">DEA:0.04</span>
        <Arrow className="mt-[10px] ml-[11px] text-[#f8e71c]" />
        <span className="ml-[24px] w-[140px] tracking-[-1.400px] text-[#f312ec]">M:0.13</span>
        <Arrow className="mt-[10px] ml-[10px] text-[#f312ec]" />
      </div>
      <MacdChart />

      <svg viewBox="12 0 1236 98" className="ml-[12px] block h-[98px] w-[1236px] bg-[#232325]">
        <path d="M414 0V17M830 0V17M1246 0V17" stroke="#adadad" strokeWidth="3.500" />
        <Label x={17} y={58} w={199} size={45} fill="#adadad">20240823</Label>
        <Label x={318} y={58} w={193} size={45} fill="#adadad">20250122</Label>
        <Label x={731} y={58} w={199} size={45} fill="#adadad">20250702</Label>
        <Label x={1053} y={58} w={193} size={45} fill="#adadad">20251203</Label>
      </svg>
      <div className="h-[13px] bg-[#1c1b20]" />
    </div>
  );
}
